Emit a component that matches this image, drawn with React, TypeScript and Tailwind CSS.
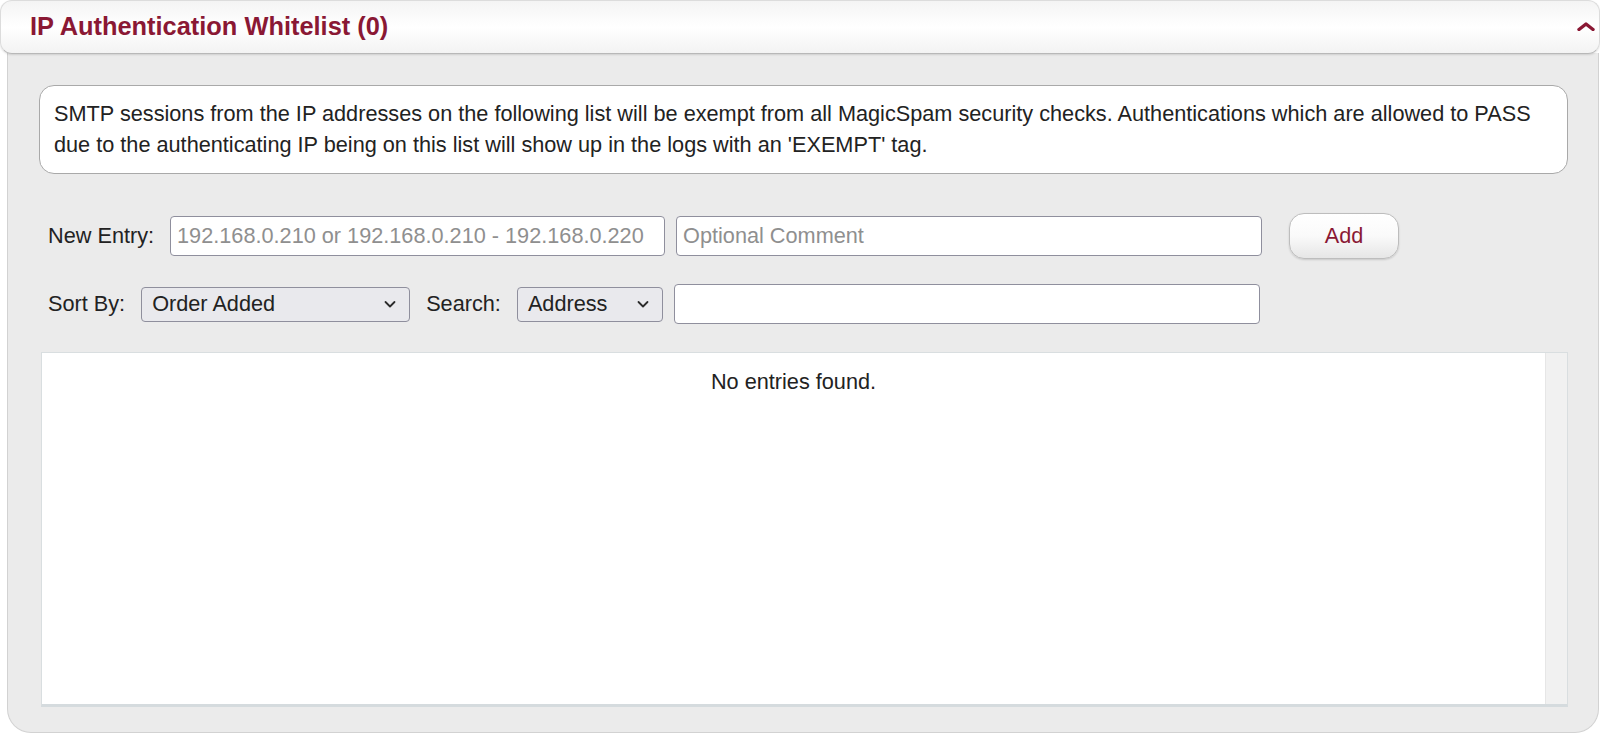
import React from "react";

function Chevron() {
  return (
    <svg width="12" height="8" viewBox="0 0 12 8" className="absolute right-[13px] top-1/2 -translate-y-1/2">
      <polyline points="1.5,2 6,6.5 10.5,2" fill="none" stroke="#2b2b2b" strokeWidth="1.8" strokeLinecap="round" strokeLinejoin="round" />
    </svg>
  );
}

export default function App() {
  return (
    <div className="w-[1600px] h-[735px] bg-white overflow-hidden font-['Liberation_Sans',Arial,sans-serif] text-[#222]">
      {/* Header */}
      <div className="relative z-10 h-[54px] rounded-[12px] border border-[#dcdcdc] border-b-[#b8b8b8] bg-gradient-to-b from-[#f4f4f4] via-white to-[#f3f3f3] shadow-[0_1px_2px_rgba(0,0,0,0.12)] flex items-center justify-between pl-[29px] pr-[4px]">
        <span className="text-[25.4px] font-bold text-[#8a1834] leading-none">IP Authentication Whitelist (0)</span>
        <svg width="18" height="9" viewBox="0 0 18 9" className="mb-[2px]">
          <polyline points="2,7.5 9,2 16,7.5" fill="none" stroke="#8a1834" strokeWidth="3.4" strokeLinecap="round" strokeLinejoin="round" />
        </svg>
      </div>

      {/* Body panel */}
      <div className="-mt-[1px] ml-[7px] w-[1592px] h-[680px] bg-[#ebebeb] border-x border-b border-[#d2d2d2] rounded-b-[24px] pt-[32px] pl-[31px] pr-[30px] pb-[25px] flex flex-col">
        {/* Description */}
        <div className="bg-white border border-[#a9a9a9] rounded-[15px] px-[14px] py-[13px] text-[21.7px] leading-[30.6px] text-[#222]">
          SMTP sessions from the IP addresses on the following list will be exempt from all MagicSpam security checks. Authentications which are allowed to PASS due to the authenticating IP being on this list will show up in the logs with an 'EXEMPT' tag.
        </div>

        {/* New Entry row */}
        <div className="mt-[39px] h-[46px] flex items-center text-[21.7px]">
          <span className="ml-[9px] mr-[16px] leading-none">New Entry:</span>
          <input
            className="w-[495px] h-[40px] bg-white border border-[#8f8f9d] rounded-[4px] pl-[6px] text-[21.7px] text-[#222] placeholder:text-[#8f8f8f] outline-none font-['Liberation_Sans',Arial,sans-serif]"
            placeholder="192.168.0.210 or 192.168.0.210 - 192.168.0.220"
          />
          <input
            className="ml-[11px] w-[586px] h-[40px] bg-white border border-[#8f8f9d] rounded-[4px] pl-[6px] text-[21.7px] text-[#222] placeholder:text-[#8f8f8f] outline-none font-['Liberation_Sans',Arial,sans-serif]"
            placeholder="Optional Comment"
          />
          <button className="ml-[27px] w-[110px] h-[46px] rounded-[15px] border border-[#bdbdbd] bg-gradient-to-b from-white via-[#fafafa] to-[#e6e6e6] shadow-[0_1px_2px_rgba(0,0,0,0.15)] text-[21.7px] text-[#8a1834] font-['Liberation_Sans',Arial,sans-serif]">
            Add
          </button>
        </div>

        {/* Sort row */}
        <div className="mt-[25px] h-[40px] flex items-center text-[21.7px]">
          <span className="ml-[9px] mr-[16px] leading-none">Sort By:</span>
          <div className="relative w-[269px] h-[35px] bg-[#e9e9ed] border border-[#8f8f9d] rounded-[4px] flex items-center pl-[10px]">
            <span className="leading-none">Order Added</span>
            <Chevron />
          </div>
          <span className="ml-[16px] mr-[16px] leading-none">Search:</span>
          <div className="relative w-[146px] h-[35px] bg-[#e9e9ed] border border-[#8f8f9d] rounded-[4px] flex items-center pl-[10px]">
            <span className="leading-none">Address</span>
            <Chevron />
          </div>
          <input className="ml-[11px] w-[586px] h-[40px] bg-white border border-[#8f8f9d] rounded-[4px] pl-[6px] text-[21.7px] outline-none" />
        </div>

        {/* List */}
        <div className="mt-[28px] ml-[2px] flex-1 bg-white border border-[#d9dee0] border-b-[3px] border-b-[#d5dbde] flex">
          <div className="flex-1 pt-[14px] text-center text-[21.7px] leading-[30.6px] text-[#222]">No entries found.</div>
          <div className="w-[22px] bg-[#f1f1f1] border-l border-[#e6e6e6]"></div>
        </div>
      </div>
    </div>
  );
}
